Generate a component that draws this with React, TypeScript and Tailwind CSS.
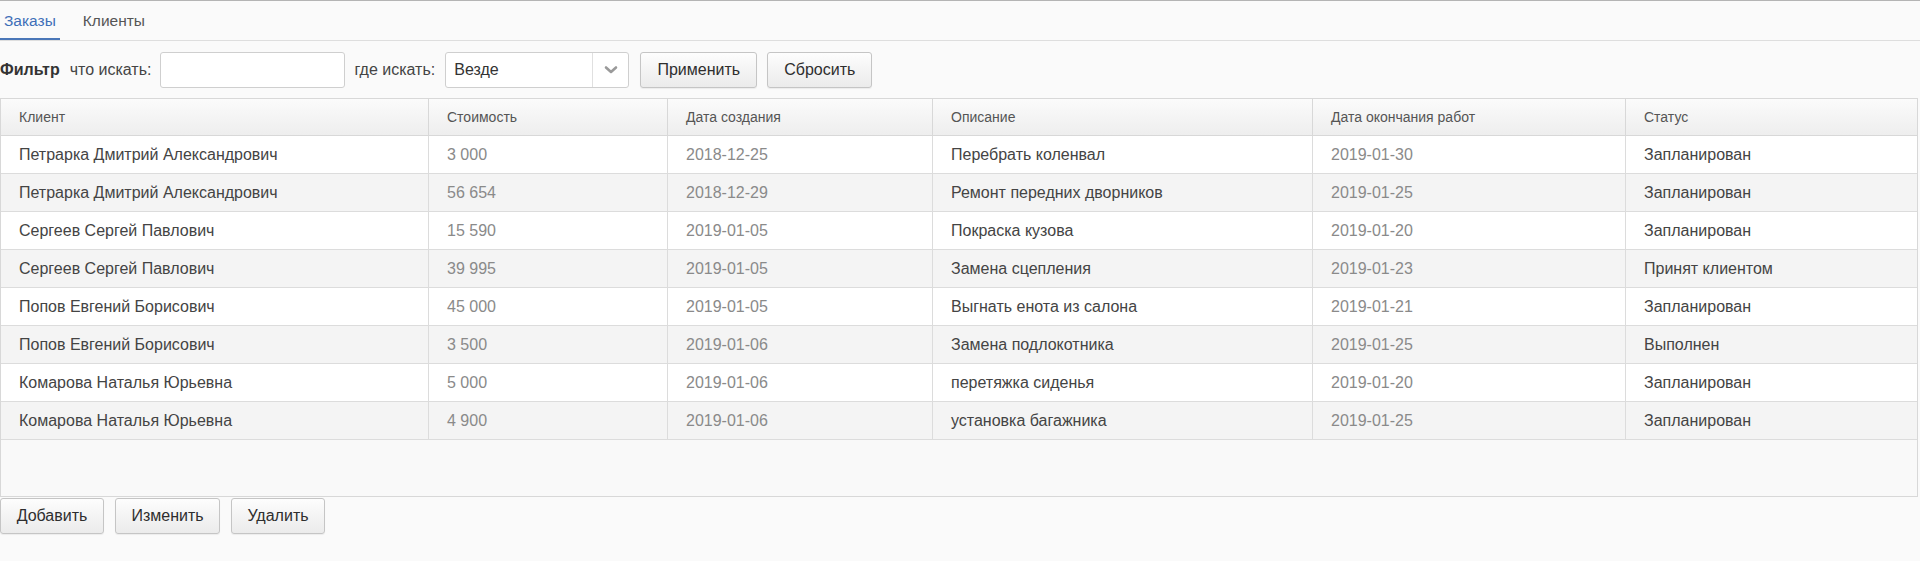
import React, { useState } from 'react';

interface Order {
  client: string;
  cost: string;
  created: string;
  description: string;
  finished: string;
  status: string;
}

const orders: Order[] = [
  { client: 'Петрарка Дмитрий Александрович', cost: '3 000', created: '2018-12-25', description: 'Перебрать коленвал', finished: '2019-01-30', status: 'Запланирован' },
  { client: 'Петрарка Дмитрий Александрович', cost: '56 654', created: '2018-12-29', description: 'Ремонт передних дворников', finished: '2019-01-25', status: 'Запланирован' },
  { client: 'Сергеев Сергей Павлович', cost: '15 590', created: '2019-01-05', description: 'Покраска кузова', finished: '2019-01-20', status: 'Запланирован' },
  { client: 'Сергеев Сергей Павлович', cost: '39 995', created: '2019-01-05', description: 'Замена сцепления', finished: '2019-01-23', status: 'Принят клиентом' },
  { client: 'Попов Евгений Борисович', cost: '45 000', created: '2019-01-05', description: 'Выгнать енота из салона', finished: '2019-01-21', status: 'Запланирован' },
  { client: 'Попов Евгений Борисович', cost: '3 500', created: '2019-01-06', description: 'Замена подлокотника', finished: '2019-01-25', status: 'Выполнен' },
  { client: 'Комарова Наталья Юрьевна', cost: '5 000', created: '2019-01-06', description: 'перетяжка сиденья', finished: '2019-01-20', status: 'Запланирован' },
  { client: 'Комарова Наталья Юрьевна', cost: '4 900', created: '2019-01-06', description: 'установка багажника', finished: '2019-01-25', status: 'Запланирован' },
];

const columns = ['Клиент', 'Стоимость', 'Дата создания', 'Описание', 'Дата окончания работ', 'Статус'];

const gridCols = 'grid grid-cols-[427px_239px_265px_380px_313px_1fr]';

const Btn: React.FC<{ children: React.ReactNode; className?: string }> = ({ children, className = '' }) => (
  <button
    type="button"
    className={`h-[36px] rounded-[3px] border border-[#c5c5c5] bg-gradient-to-b from-[#fdfdfd] to-[#ebebeb] text-[16px] text-[#2e2e2e] shadow-[0_1px_1px_rgba(0,0,0,0.06)] ${className}`}
  >
    {children}
  </button>
);

const App: React.FC = () => {
  const [tab, setTab] = useState(0);
  const [selected, setSelected] = useState<number | null>(null);

  return (
    <div className="min-h-[561px] bg-[#fafafa] font-['Liberation_Sans',Arial,sans-serif] text-[#333]">
      {/* Tabs */}
      <div className="flex h-[41px] items-end gap-[19px] border-t border-b border-t-[#b4b4b4] border-b-[#dedede]">
        {['Заказы', 'Клиенты'].map((t, i) => (
          <button
            key={t}
            type="button"
            onClick={() => setTab(i)}
            className={`h-[39px] px-[4px] pt-[2px] text-[15.5px] ${
              tab === i ? 'border-b-2 border-[#4a77b8] text-[#3e6fb8]' : 'border-b-2 border-transparent text-[#555]'
            }`}
          >
            {t}
          </button>
        ))}
      </div>

      {/* Filter */}
      <div className="mt-[11px] flex h-[36px] items-center text-[16px] text-[#444]">
        <span className="font-bold text-[#333]">Фильтр</span>
        <span className="ml-[10px]">что искать:</span>
        <input className="ml-[9px] h-[36px] w-[185px] rounded-[3px] border border-[#cfcfcf] bg-white px-2 outline-none" />
        <span className="ml-[9px]">где искать:</span>
        <div className="ml-[10px] flex h-[36px] w-[184px] rounded-[3px] border border-[#cfcfcf] bg-white">
          <span className="flex flex-1 items-center pl-[8px] text-[16px] text-[#333]">Везде</span>
          <span className="flex w-[36px] items-center justify-center border-l border-[#e0e0e0]">
            <svg width="14" height="10" viewBox="0 0 14 10">
              <path d="M2 2.5 L7 7 L12 2.5" fill="none" stroke="#9a9a9a" strokeWidth="2.6" strokeLinecap="round" strokeLinejoin="round" />
            </svg>
          </span>
        </div>
        <Btn className="ml-[11px] w-[117px]">Применить</Btn>
        <Btn className="ml-[10px] w-[105px]">Сбросить</Btn>
      </div>

      {/* Grid */}
      <div className="mt-[10px] mr-[2px] border border-[#d8d8d8] bg-[#f9f9f9]">
        <div className={`${gridCols} h-[37px] border-b border-[#d8d8d8] bg-gradient-to-b from-[#fbfbfb] to-[#eeeeee] text-[14px] text-[#555]`}>
          {columns.map((c, i) => (
            <div key={c} className={`flex items-center pl-[18px] ${i > 0 ? 'border-l border-[#d8d8d8]' : ''}`}>
              {c}
            </div>
          ))}
        </div>
        {orders.map((o, r) => (
          <div
            key={r}
            onClick={() => setSelected(r)}
            className={`${gridCols} h-[38px] border-b border-[#dcdcdc] text-[16px] ${
              selected === r ? 'bg-[#dfe8f5]' : r % 2 === 0 ? 'bg-white' : 'bg-[#f4f4f4]'
            }`}
          >
            <div className="flex items-center pl-[18px] text-[#444]">{o.client}</div>
            <div className="flex items-center border-l border-[#dcdcdc] pl-[18px] text-[#8a8a8a]">{o.cost}</div>
            <div className="flex items-center border-l border-[#dcdcdc] pl-[18px] text-[#8a8a8a]">{o.created}</div>
            <div className="flex items-center border-l border-[#dcdcdc] pl-[18px] text-[#444]">{o.description}</div>
            <div className="flex items-center border-l border-[#dcdcdc] pl-[18px] text-[#8a8a8a]">{o.finished}</div>
            <div className="flex items-center border-l border-[#dcdcdc] pl-[18px] text-[#444]">{o.status}</div>
          </div>
        ))}
        <div className="h-[56px]" />
      </div>

      {/* Actions */}
      <div className="mt-[1px] flex gap-[11px]">
        <Btn className="w-[104px]">Добавить</Btn>
        <Btn className="w-[105px]">Изменить</Btn>
        <Btn className="w-[94px]">Удалить</Btn>
      </div>
    </div>
  );
};

export default App;
